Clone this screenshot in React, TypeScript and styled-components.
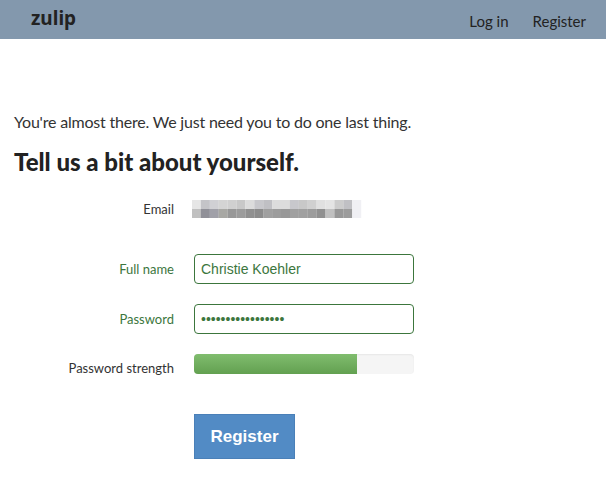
import React from "react";
import styled, { createGlobalStyle } from "styled-components";

const Global = createGlobalStyle`
  html, body { margin: 0; padding: 0; background: #fff; }
  body { font-family: Lato, "Liberation Sans", sans-serif; color: #333; }
`;

const Header = styled.header`
  height: 39px;
  background: #8398ad;
  display: flex;
  align-items: center;
  justify-content: space-between;
  padding: 0 20px 0 31px;
`;

const Logo = styled.div`
  font-family: "Noto Sans", Lato, sans-serif;
  font-weight: 700;
  font-size: 19px;
  color: #222;
  margin-top: -4px;
`;

const Nav = styled.nav`
  display: flex;
  gap: 24px;
  margin-top: 2px;
`;

const NavLink = styled.a`
  font-size: 15px;
  color: #222;
  text-decoration: none;
  font-family: Lato, sans-serif;
`;

const Main = styled.main`
  padding: 73px 14px 0 14px;
`;

const Intro = styled.p`
  margin: 0;
  font-size: 16px;
  letter-spacing: -0.2px;
  line-height: 20px;
  color: #333;
`;

const Heading = styled.h2`
  margin: 16px 0 0 0;
  font-size: 24px;
  line-height: 28px;
  font-weight: 900;
  color: #222;
`;

const Form = styled.div`
  margin-top: 24px;
  display: flex;
  flex-direction: column;
`;

const Row = styled.div<{ $h: number; $mt?: number }>`
  display: grid;
  grid-template-columns: 160px 220px;
  column-gap: 20px;
  align-items: center;
  height: ${(p) => p.$h}px;
  margin-top: ${(p) => p.$mt ?? 0}px;
`;

const Label = styled.label<{ $ok?: boolean; $dy?: number }>`
  text-align: right;
  font-size: 13px;
  color: ${(p) => (p.$ok ? "#3c763d" : "#333")};
  position: relative;
  top: ${(p) => p.$dy ?? 0}px;
`;

const Blur = styled.svg`
  display: block;
  margin-left: -2px;
`;

const Input = styled.input`
  box-sizing: border-box;
  width: 220px;
  height: 30px;
  border: 1px solid #3c763d;
  border-radius: 4px;
  padding: 0 6px;
  font-family: "Liberation Sans", Arial, sans-serif;
  font-size: 14px;
  color: #3c763d;
  outline: none;
  background: #fff;
`;

const Bar = styled.div`
  width: 220px;
  height: 20px;
  border-radius: 4px;
  background: #f5f5f5;
  box-shadow: inset 0 1px 2px rgba(0, 0, 0, 0.06);
  overflow: hidden;
`;

const Fill = styled.div`
  height: 100%;
  background: linear-gradient(#80bd6e, #62a050);
`;

const Button = styled.button`
  box-sizing: border-box;
  width: 101px;
  height: 45px;
  background: #528bc5;
  border: 1px solid #4a80b8;
  border-radius: 0;
  color: #fff;
  font-family: "Liberation Sans", Arial, sans-serif;
  font-weight: 700;
  font-size: 17px;
  padding: 0;
`;

const top = ["#e6e6e6","#c4c4c8","#d0d0d4","#d4d4d4","#d0d0d0","#c8c8c8","#dcdcdc","#c8c8cc","#c0c0c4","#dcdcdc","#dcdcdc","#c8c8cc","#c8c8c8","#d0d0d0","#e0e0e0","#e4e4e4","#cccccc","#c0c0c4","#f0f0f4"];
const bot = ["#c0c0c0","#909098","#a0a0a8","#a8a8a4","#989898","#9c9c9c","#909090","#8c8c8c","#a0a0a0","#9c9c9c","#989898","#a0a0a0","#a0a0a0","#9c9c9c","#909090","#c0c0c0","#989898","#9c9c9c","#f0f0f4"];

export default function App() {
  return (
    <>
      <Global />
      <Header>
        <Logo>zulip</Logo>
        <Nav>
          <NavLink href="#">Log in</NavLink>
          <NavLink href="#">Register</NavLink>
        </Nav>
      </Header>
      <Main>
        <Intro>You're almost there. We just need you to do one last thing.</Intro>
        <Heading>Tell us a bit about yourself.</Heading>
        <Form>
          <Row $h={18}>
            <Label>Email</Label>
            <Blur width="170" height="18" viewBox="0 0 170 18">
              {top.map((c, i) => (
                <rect key={"t" + i} x={i * 8.9} y={0} width={9} height={9} fill={c} />
              ))}
              {bot.map((c, i) => (
                <rect key={"b" + i} x={i * 8.9} y={9} width={9} height={9} fill={c} />
              ))}
            </Blur>
          </Row>
          <Row $h={30} $mt={36}>
            <Label $ok>Full name</Label>
            <Input defaultValue="Christie Koehler" />
          </Row>
          <Row $h={30} $mt={20}>
            <Label $ok>Password</Label>
            <Input type="password" defaultValue="christiekoehler12" />
          </Row>
          <Row $h={20} $mt={20}>
            <Label $dy={4}>Password strength</Label>
            <Bar>
              <Fill style={{ width: "74%" }} />
            </Bar>
          </Row>
          <Row $h={45} $mt={40}>
            <span />
            <Button>Register</Button>
          </Row>
        </Form>
      </Main>
    </>
  );
}
